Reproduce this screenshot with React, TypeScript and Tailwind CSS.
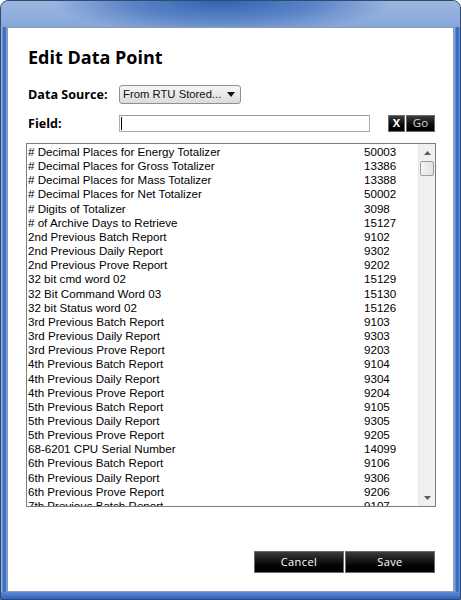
import React from 'react';

const points: [string, string][] = [
  ['# Decimal Places for Energy Totalizer', '50003'],
  ['# Decimal Places for Gross Totalizer', '13386'],
  ['# Decimal Places for Mass Totalizer', '13388'],
  ['# Decimal Places for Net Totalizer', '50002'],
  ['# Digits of Totalizer', '3098'],
  ['# of Archive Days to Retrieve', '15127'],
  ['2nd Previous Batch Report', '9102'],
  ['2nd Previous Daily Report', '9302'],
  ['2nd Previous Prove Report', '9202'],
  ['32 bit cmd word 02', '15129'],
  ['32 Bit Command Word 03', '15130'],
  ['32 bit Status word 02', '15126'],
  ['3rd Previous Batch Report', '9103'],
  ['3rd Previous Daily Report', '9303'],
  ['3rd Previous Prove Report', '9203'],
  ['4th Previous Batch Report', '9104'],
  ['4th Previous Daily Report', '9304'],
  ['4th Previous Prove Report', '9204'],
  ['5th Previous Batch Report', '9105'],
  ['5th Previous Daily Report', '9305'],
  ['5th Previous Prove Report', '9205'],
  ['68-6201 CPU Serial Number', '14099'],
  ['6th Previous Batch Report', '9106'],
  ['6th Previous Daily Report', '9306'],
  ['6th Previous Prove Report', '9206'],
  ['7th Previous Batch Report', '9107'],
];

const label = "w-[93px] pl-[2px] font-['Open_Sans',sans-serif] font-bold text-[12.6px] text-black leading-[19px]";
const darkBtn =
  'flex items-center justify-center bg-linear-to-b from-[#3c3c3c] via-[#111111] to-[#000000] border border-[#6a6a6a]';

export default function App() {
  return (
    <div className="w-[461px] h-[600px] bg-white">
      {/* window frame */}
      <div className="h-full flex flex-col rounded-t-[8px] border border-[#34496b] bg-[linear-gradient(to_right,#a8bfe4_0px,#4f7fcb_2px,#2f63bf_4px,#8fb0e2_6px,#8fb0e2_453px,#2f63bf_456px,#4f7fcb_458px,#a8bfe4_460px)] overflow-hidden">
        <div className="h-[26px] shrink-0 bg-[radial-gradient(ellipse_170px_34px_at_48%_0%,#3163b0_0%,#5a84c7_55%,transparent_100%),linear-gradient(to_bottom,#9db7e0,#86a6da)]" />
        <div className="flex-1 flex px-[6px]">
          {/* dialog body */}
          <div className="flex-1 flex flex-col bg-white border border-[#8d9cb6] pl-[18px] pr-[16px] pt-[17px] font-['Liberation_Sans',Arial,sans-serif]">
            <h1 className="pl-[2px] font-['Open_Sans',sans-serif] font-bold text-[18px] leading-[24px] text-black">
              Edit Data Point
            </h1>

            <div className="mt-[16px] flex items-center h-[19px]">
              <span className={label}>Data Source:</span>
              <div className="w-[122px] h-[19px] flex items-center justify-between rounded-[3px] border border-[#8f8f8f] bg-linear-to-b from-[#f6f6f6] to-[#dcdcdc] pl-[3px] pr-[5px]">
                <span className="text-[11.3px] leading-[15px] text-[#111]">From RTU Stored...</span>
                <svg width="8" height="5" viewBox="0 0 8 5">
                  <path d="M0 0 H8 L4 5 Z" fill="#111" />
                </svg>
              </div>
            </div>

            <div className="mt-[10px] flex items-center h-[18px]">
              <span className={label}>Field:</span>
              <div className="w-[251px] h-[17px] border border-[#abadb3] border-t-[#9a9a9a] bg-white flex items-center pl-[1px]">
                <span className="w-[1px] h-[13px] bg-black" />
              </div>
              <div className="ml-[18px] flex gap-[1px] h-[17px]">
                <button className={`${darkBtn} w-[17px] text-white font-bold text-[11px] font-['Open_Sans',sans-serif]`}>X</button>
                <button className={`${darkBtn} w-[29px] text-[#d8d8d8] text-[11.5px] font-['Open_Sans',sans-serif]`}>Go</button>
              </div>
            </div>

            {/* data point list */}
            <div className="mt-[11px] w-[410px] h-[364px] border border-[#7d7d7d] flex bg-white">
              <div className="flex-1 overflow-hidden pt-[1px] pl-[1px]">
                {points.map(([name, id]) => (
                  <div key={name} className="grid grid-cols-[336px_1fr] h-[14.17px] text-[11.6px] leading-[14.17px] text-black whitespace-nowrap">
                    <span>{name}</span>
                    <span>{id}</span>
                  </div>
                ))}
              </div>
              <div className="w-[17px] flex flex-col bg-[#f0f0f0] border-l border-[#e8e8e8]">
                <div className="h-[17px] flex items-center justify-center">
                  <svg width="7" height="4" viewBox="0 0 7 4">
                    <path d="M0 4 L3.5 0 L7 4 Z" fill="#5a5a5a" />
                  </svg>
                </div>
                <div className="mx-[1px] h-[15px] rounded-[2px] border border-[#9c9c9c] bg-linear-to-r from-[#f4f4f4] to-[#e2e2e2]" />
                <div className="flex-1" />
                <div className="h-[17px] flex items-center justify-center">
                  <svg width="7" height="4" viewBox="0 0 7 4">
                    <path d="M0 0 L7 0 L3.5 4 Z" fill="#5a5a5a" />
                  </svg>
                </div>
              </div>
            </div>

            <div className="mt-[44px] mr-[2px] flex justify-end gap-[1px]">
              <button className={`${darkBtn} w-[90px] h-[22px] text-white text-[11px] tracking-[0.4px] font-['Open_Sans',sans-serif]`}>Cancel</button>
              <button className={`${darkBtn} w-[90px] h-[22px] text-white text-[11px] tracking-[0.4px] font-['Open_Sans',sans-serif]`}>Save</button>
            </div>
          </div>
        </div>
        <div className="h-[7px] shrink-0 bg-linear-to-b from-[#5d8bd4] to-[#2f63bf]" />
      </div>
    </div>
  );
}
